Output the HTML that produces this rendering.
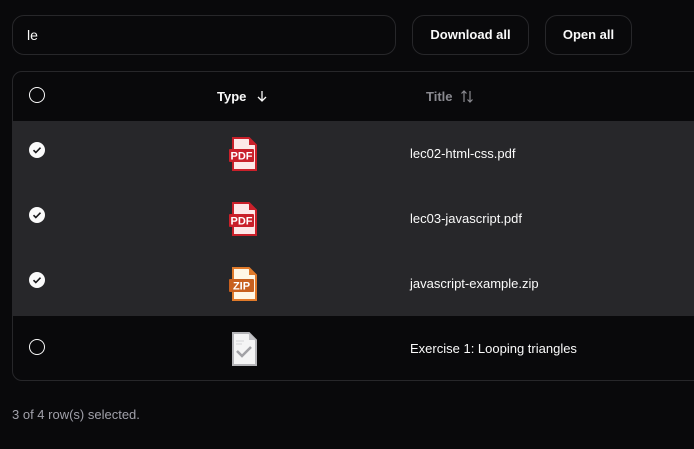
<!DOCTYPE html>
<html><head><style>
*{box-sizing:border-box;margin:0;padding:0}
body{width:694px;height:449px;background:#09090b;font-family:"Liberation Sans",sans-serif;color:#fafafa;position:relative;overflow:hidden}
.abs{position:absolute}
.input{left:12px;top:15px;width:384px;height:40px;border:1px solid #27272a;border-radius:12px;font-size:14px;padding:11px 0 0 14px}
.btn{top:15px;height:40px;border:1px solid #27272a;border-radius:12px;font-size:13px;font-weight:bold;text-align:center;line-height:38px}
.table{left:12px;top:71px;width:700px;height:310px;border:1px solid #27272a;border-radius:10px;overflow:hidden}
.row{position:absolute;left:0;width:100%}
.sel{background:#27272a}
.circ{position:absolute;left:16px;width:16px;height:16px;border-radius:50%;border:1.5px solid #fafafa}
.chk{position:absolute;left:16px;width:16px;height:16px;border-radius:50%;background:#fafafa}
.title{position:absolute;left:397px;font-size:13px}
.ico{position:absolute;left:215px}
</style></head><body>
<div class="abs input">le</div>
<div class="abs btn" style="left:412px;width:117px">Download all</div>
<div class="abs btn" style="left:545px;width:87px">Open all</div>
<div class="abs table">
 <div class="row" style="top:0;height:49px">
  <div class="circ" style="top:15px"></div>
  <div style="position:absolute;left:204px;top:17px;font-size:13px;font-weight:bold">Type <svg style="margin-left:6px;vertical-align:-2px" width="12" height="13"><path d="M6 1v10M2 7l4 4 4-4" stroke="#fafafa" stroke-width="1.3" fill="none"/></svg></div>
  <div style="position:absolute;left:413px;top:17px;font-size:13px;font-weight:bold;color:#8a8a90">Title <svg style="margin-left:4px;vertical-align:-2px" width="14" height="13"><path d="M4 12V1M1.5 3.5L4 1l2.5 2.5M10 1v11M7.5 9.5L10 12l2.5-2.5" stroke="#8a8a90" stroke-width="1.2" fill="none"/></svg></div>
 </div>
 <div class="row sel" style="top:49px;height:65px">
  <div class="chk" style="top:21px"><svg width="16" height="16"><path d="M4.5 8.2l2.3 2.3 4.7-4.8" stroke="#18181b" stroke-width="1.6" fill="none"/></svg></div>
  <svg class="ico" style="top:16px" width="32" height="34"><path d="M5 1h16l7 7v25H5z" fill="#fde8e8" stroke="#c9202a" stroke-width="2"/><path d="M21 1v7h7" fill="#c9202a"/><rect x="1" y="12" width="25" height="13" rx="1" fill="#c9202a"/><text x="13.5" y="22.5" font-size="11" font-weight="bold" fill="#fff" text-anchor="middle" font-family="Liberation Sans">PDF</text></svg>
  <div class="title" style="top:25px">lec02-html-css.pdf</div>
 </div>
 <div class="row sel" style="top:114px;height:65px">
  <div class="chk" style="top:21px"><svg width="16" height="16"><path d="M4.5 8.2l2.3 2.3 4.7-4.8" stroke="#18181b" stroke-width="1.6" fill="none"/></svg></div>
  <svg class="ico" style="top:16px" width="32" height="34"><path d="M5 1h16l7 7v25H5z" fill="#fde8e8" stroke="#c9202a" stroke-width="2"/><path d="M21 1v7h7" fill="#c9202a"/><rect x="1" y="12" width="25" height="13" rx="1" fill="#c9202a"/><text x="13.5" y="22.5" font-size="11" font-weight="bold" fill="#fff" text-anchor="middle" font-family="Liberation Sans">PDF</text></svg>
  <div class="title" style="top:25px">lec03-javascript.pdf</div>
 </div>
 <div class="row sel" style="top:179px;height:65px">
  <div class="chk" style="top:21px"><svg width="16" height="16"><path d="M4.5 8.2l2.3 2.3 4.7-4.8" stroke="#18181b" stroke-width="1.6" fill="none"/></svg></div>
  <svg class="ico" style="top:16px" width="32" height="34"><path d="M5 1h16l7 7v25H5z" fill="#fff7e6" stroke="#e07a2a" stroke-width="2"/><path d="M21 1v7h7" fill="#e07a2a"/><rect x="1" y="12" width="25" height="13" rx="1" fill="#c8601e"/><text x="13.5" y="22.5" font-size="11" font-weight="bold" fill="#fff" text-anchor="middle" font-family="Liberation Sans">ZIP</text></svg>
  <div class="title" style="top:25px">javascript-example.zip</div>
 </div>
 <div class="row" style="top:244px;height:65px">
  <div class="circ" style="top:23px"></div>
  <svg class="ico" style="top:16px" width="32" height="34"><path d="M5 1h16l7 7v25H5z" fill="#f4f4f5" stroke="#b4b4b8" stroke-width="2"/><path d="M21 1v7h7" fill="#c4c4c8"/><path d="M8 9h8M8 12h6" stroke="#d4d4d8" stroke-width="1"/><path d="M9 19l5 5 9-9" stroke="#a1a1a6" stroke-width="2.5" fill="none"/></svg>
  <div class="title" style="top:25px">Exercise 1: Looping triangles</div>
 </div>
</div>
<div class="abs" style="left:12px;top:407px;font-size:13px;color:#a1a1aa">3 of 4 row(s) selected.</div>
</body></html>
